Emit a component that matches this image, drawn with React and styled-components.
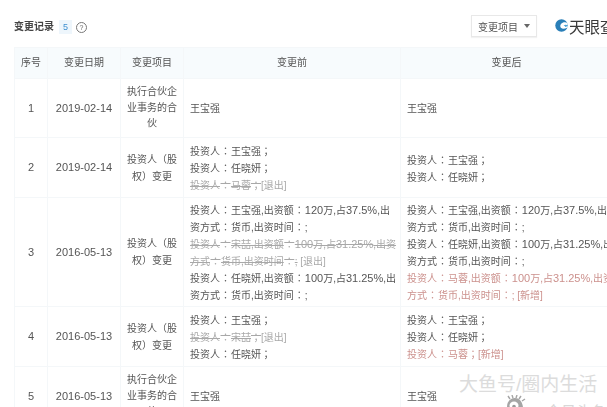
import React from "react";
import styled, { createGlobalStyle } from "styled-components";

const Global = createGlobalStyle`
  html, body { margin: 0; padding: 0; background: #fff; }
  body { width: 607px; height: 407px; overflow: hidden; font-family: "Liberation Sans", "Noto Sans CJK SC", sans-serif; }
`;
const Page = styled.div`
  position: relative; width: 607px; height: 407px; overflow: hidden; background: #fff;
  padding: 14px 0 0 14px; box-sizing: border-box; color: #555;
`;
const Soft = styled.div`
  filter: blur(0.4px);
`;
const TopBar = styled.div`
  display: flex; align-items: center; height: 26px; width: 593px; margin-bottom: 7px;
`;
const Title = styled.h2`
  margin: 0; font-size: 10px; font-weight: 700; color: #444; line-height: 26px;
`;
const Count = styled.span`
  margin-left: 5px; width: 13px; height: 14px; background: #eef6fc; color: #3d8fd0; font-size: 9px;
  display: flex; align-items: center; justify-content: center;
`;
const Help = styled.span`
  margin-left: 4px; width: 9px; height: 9px; border: 1px solid #777; border-radius: 50%;
  color: #666; font-size: 7px; display: flex; align-items: center; justify-content: center;
`;
const Select = styled.div`
  margin-left: auto; margin-bottom: 2px; width: 66px; height: 22px; box-sizing: border-box; border: 1px solid #e8e8e8;
  font-size: 10px; color: #555; display: flex; align-items: center; justify-content: center; gap: 6px;
  box-shadow: 0 1px 1px #f2f2f2;
`;
const Caret = styled.span`
  width: 0; height: 0; border: 3.5px solid transparent; border-top: 4px solid #666; border-bottom: 0;
`;
const Logo = styled.div`
  width: 52px; margin-left: 18px; margin-bottom: 3px; flex: none; display: flex; align-items: center; gap: 1px;
  font-size: 15.5px; color: #3a3a3a; white-space: nowrap; overflow: hidden;
`;
const LogoMark = styled.svg`
  flex: none;
`;
const Table = styled.table`
  border-collapse: collapse; table-layout: fixed; width: 598px; font-size: 10px; color: #555;
  th, td { border: 1px solid #f4f7f9; text-align: center; padding: 0; line-height: 16px; font-weight: 400; white-space: nowrap; }
`;
const Head = styled.th`
  background: #f7fbfd; height: 30px; color: #555;
`;
const Row = styled.tr`
  height: ${p => p.$h}px;
`;
const Content = styled.td`
  && { text-align: left; padding: 2px 6px 0; overflow: visible; }
`;
const Line = styled.div`line-height: 16px;`;
const Removed = styled.span`
  color: #a8a8a8; text-decoration: line-through;
`;
const Tag = styled.span`color: #a8a8a8;`;
const Added = styled.div`color: #cc918d;`;
const Lat = styled.span`font-size: 11px;`;
const Punct = styled.span`
  font-family: "Noto Sans CJK TC", sans-serif;
  margin: 0 ${p => p.$gap}px;
`;
const Watermark = styled.div`
  position: absolute; left: 459px; top: 373px; font-size: 19px; line-height: 24px; color: #dcdcdc; white-space: nowrap;
`;
const Handle = styled.div`
  position: absolute; left: 546px; top: 402px; font-size: 15px; line-height: 20px; color: #d8d8d8; white-space: nowrap;
`;
const Weibo = styled.svg`
  position: absolute; left: 504px; top: 395px;
`;

const T = ({ children }) => {
  const parts = String(children).split(/([0-9A-Za-z.%\-]+|[：；（）])/).filter(Boolean);
  return parts.map((s, i) =>
    /^[0-9A-Za-z.%\-]+$/.test(s) ? <Lat key={i}>{s}</Lat>
    : /^[：；（）]$/.test(s) ? <Punct key={i} $gap={s === "：" ? 0.5 : 0}>{s}</Punct>
    : s
  );
};

const mgmt = <>执行合伙企<br />业事务的合<br />伙</>;
const equity = <><T>投资人（股</T><br /><T>权）变更</T></>;

export default function App() {
  return (
    <Page>
      <Global />
      <Soft>
        <TopBar>
          <Title>变更记录</Title>
          <Count>5</Count>
          <Help>?</Help>
          <Select>变更项目<Caret /></Select>
          <Logo>
            <LogoMark width="13" height="13" viewBox="0 0 13 13" aria-hidden="true">
              <circle cx="6.5" cy="6.5" r="6.2" fill="#2a7fb8" />
              <path d="M12.7 4.2C10.5 2.6 7.6 3 6 5c-1 1.3-1 3 .2 4 1.3 1 3.4.8 6.3-.6V4.2z" fill="#fff" />
              <path d="M13 6.3c-1.6-.9-3.4-.7-4.4.1.9.2 1.5.9 1.7 1.7.9-.2 1.9-.8 2.7-1.8z" fill="#4aa3d8" />
            </LogoMark>
            天眼查
          </Logo>
        </TopBar>
        <Table>
          <colgroup>
            <col style={{ width: 33 }} /><col style={{ width: 73 }} /><col style={{ width: 63 }} />
            <col style={{ width: 217 }} /><col style={{ width: 212 }} />
          </colgroup>
          <thead>
            <tr>
              <Head>序号</Head><Head>变更日期</Head><Head>变更项目</Head><Head>变更前</Head><Head>变更后</Head>
            </tr>
          </thead>
          <tbody>
            <Row $h={59}>
              <td><T>1</T></td><td><T>2019-02-14</T></td><td>{mgmt}</td>
              <Content>王宝强</Content><Content>王宝强</Content>
            </Row>
            <Row $h={60}>
              <td><T>2</T></td><td><T>2019-02-14</T></td><td>{equity}</td>
              <Content>
                <Line><T>投资人：王宝强；</T></Line><Line><T>投资人：任晓妍；</T></Line>
                <Line><Removed><T>投资人：马蓉；</T></Removed><Tag>[退出]</Tag></Line>
              </Content>
              <Content>
                <Line><T>投资人：王宝强；</T></Line><Line><T>投资人：任晓妍；</T></Line>
              </Content>
            </Row>
            <Row $h={109}>
              <td><T>3</T></td><td><T>2016-05-13</T></td><td>{equity}</td>
              <Content>
                <Line><T>投资人：王宝强,出资额：120万,占37.5%,出</T></Line>
                <Line><T>资方式：货币,出资时间：;</T></Line>
                <Line><Removed><T>投资人：宋喆,出资额：100万,占31.25%,出资</T></Removed></Line>
                <Line><Removed><T>方式：货币,出资时间：;</T></Removed> <Tag>[退出]</Tag></Line>
                <Line><T>投资人：任晓妍,出资额：100万,占31.25%,出</T></Line>
                <Line><T>资方式：货币,出资时间：;</T></Line>
              </Content>
              <Content>
                <Line><T>投资人：王宝强,出资额：120万,占37.5%,出</T></Line>
                <Line><T>资方式：货币,出资时间：;</T></Line>
                <Line><T>投资人：任晓妍,出资额：100万,占31.25%,出</T></Line>
                <Line><T>资方式：货币,出资时间：;</T></Line>
                <Added><T>投资人：马蓉,出资额：100万,占31.25%,出资</T></Added>
                <Added><T>方式：货币,出资时间：;</T> [新增]</Added>
              </Content>
            </Row>
            <Row $h={60}>
              <td><T>4</T></td><td><T>2016-05-13</T></td><td>{equity}</td>
              <Content>
                <Line><T>投资人：王宝强；</T></Line>
                <Line><Removed><T>投资人：宋喆；</T></Removed><Tag>[退出]</Tag></Line>
                <Line><T>投资人：任晓妍；</T></Line>
              </Content>
              <Content>
                <Line><T>投资人：王宝强；</T></Line><Line><T>投资人：任晓妍；</T></Line>
                <Added><T>投资人：马蓉；</T>[新增]</Added>
              </Content>
            </Row>
            <Row $h={59}>
              <td><T>5</T></td><td><T>2016-05-13</T></td><td>{mgmt}</td>
              <Content>王宝强</Content><Content>王宝强</Content>
            </Row>
          </tbody>
        </Table>
      </Soft>
      <Watermark>大鱼号/圈内生活</Watermark>
      <Handle>今日头条</Handle>
      <Weibo width="22" height="12" viewBox="0 0 22 12" aria-hidden="true">
        <path d="M3 12c0-5 3-9 8-9 4 0 7 3 8 9z" fill="#a5a5a5" />
        <path d="M6 4 4 1M9 3 8 0M12 3l1-3M15 4l2-3M18 6l3-2" stroke="#a5a5a5" strokeWidth="1.4" />
        <ellipse cx="10" cy="10.5" rx="4.5" ry="4" fill="#fff" />
        <circle cx="10" cy="11.5" r="1.8" fill="#999" />
      </Weibo>
    </Page>
  );
}
